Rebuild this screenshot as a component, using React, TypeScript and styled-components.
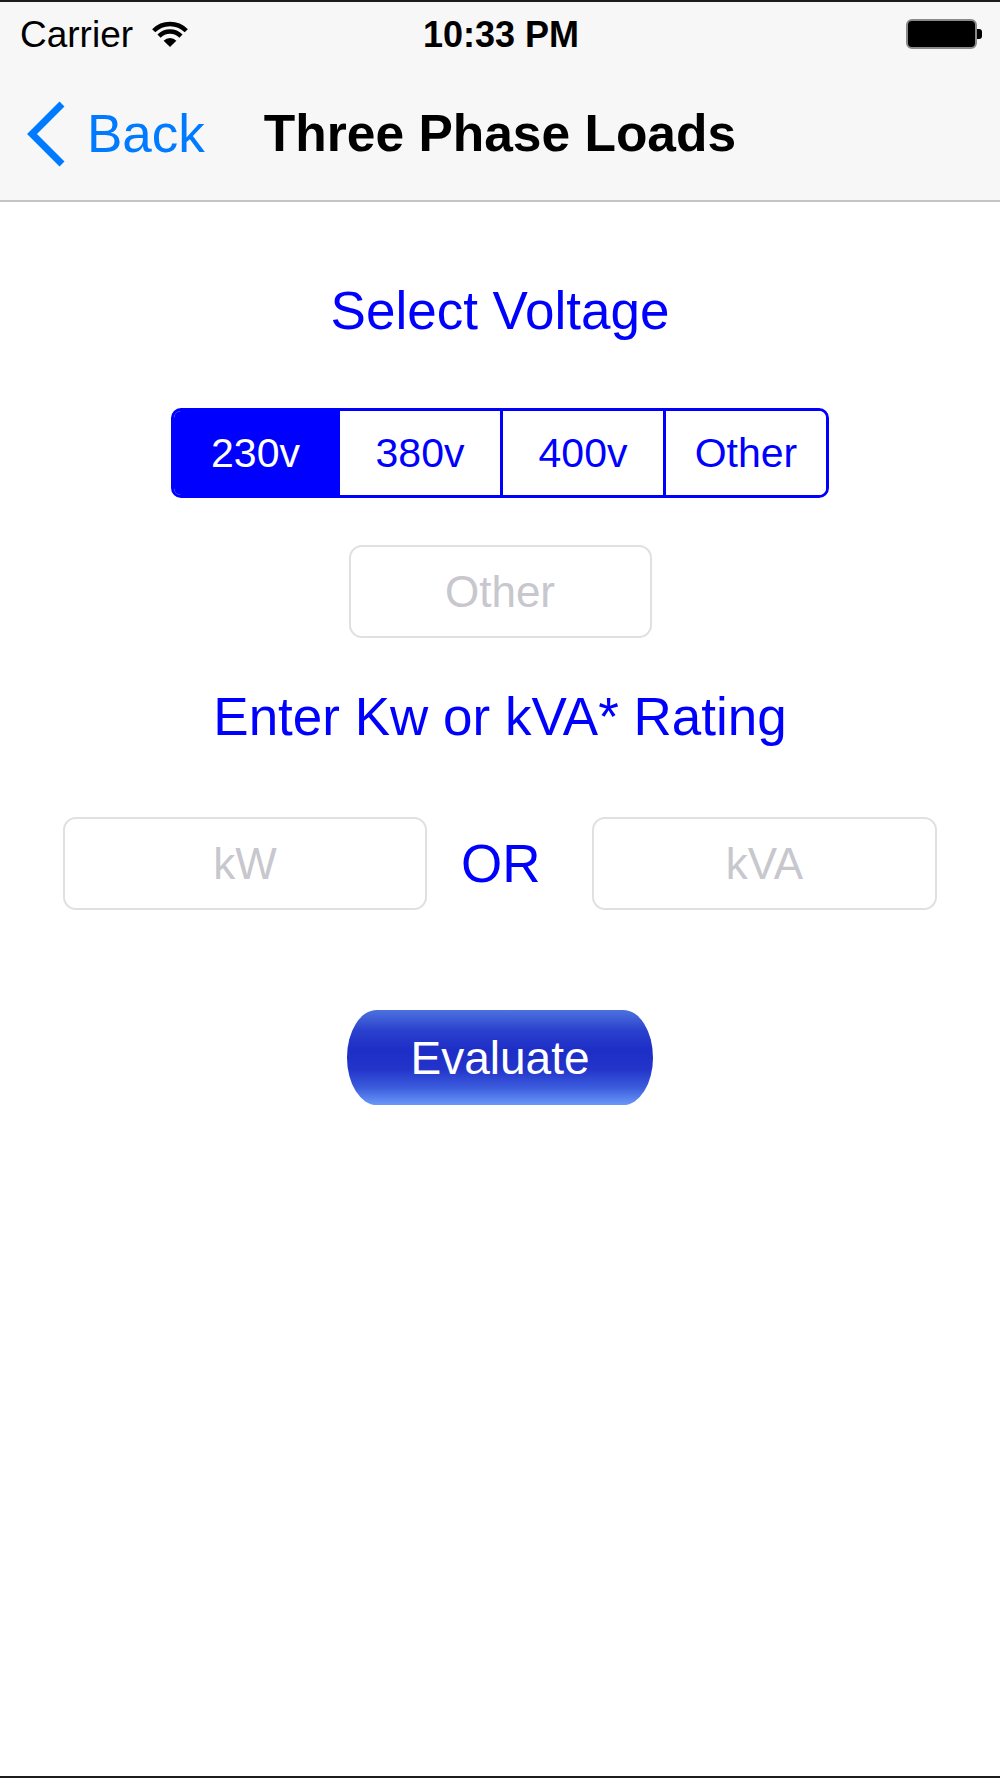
import { useState } from "react";
import styled, { createGlobalStyle } from "styled-components";

const GlobalStyle = createGlobalStyle`
  html, body {
    margin: 0;
    padding: 0;
    background: #ffffff;
  }
  body {
    font-family: "Liberation Sans", Arial, Helvetica, sans-serif;
  }
  * {
    box-sizing: border-box;
  }
`;

const BLUE = "#0000ff";
const IOS_BLUE = "#007aff";

const Screen = styled.div`
  min-height: 1778px;
  display: flex;
  flex-direction: column;
  border-top: 2px solid #1c1c1c;
  border-bottom: 2px solid #1c1c1c;
  background: #ffffff;
`;

const Header = styled.header`
  background: #f7f7f7;
  border-bottom: 2px solid #c4c4c8;
`;

const StatusBar = styled.div`
  height: 61px;
  padding: 3px 18px 0 20px;
  display: grid;
  grid-template-columns: 1fr auto 1fr;
  align-items: center;
  color: #000;
  font-size: 37px;
  line-height: 37px;
`;

const Carrier = styled.div`
  display: flex;
  align-items: center;
  gap: 17px;
`;

const Clock = styled.div`
  font-weight: 700;
  font-size: 36px;
`;

const Battery = styled.div`
  justify-self: end;
  display: flex;
  align-items: center;
`;

const BatteryBody = styled.div`
  width: 71px;
  height: 30px;
  border: 2px solid #8a8a8a;
  border-radius: 6px;
  background: #000;
`;

const BatteryNub = styled.div`
  width: 5px;
  height: 10px;
  border-radius: 0 3px 3px 0;
  background: #000;
`;

const NavBar = styled.nav`
  height: 137px;
  padding: 4px 25px 0;
  display: grid;
  grid-template-columns: 1fr auto 1fr;
  align-items: center;
`;

const BackButton = styled.button`
  display: flex;
  align-items: center;
  gap: 20px;
  padding: 0;
  border: none;
  background: none;
  color: ${IOS_BLUE};
  font-family: inherit;
  font-size: 53px;
  line-height: 53px;
  cursor: pointer;
  justify-self: start;
`;

const Title = styled.h1`
  margin: 0;
  font-size: 51.5px;
  line-height: 53px;
  font-weight: 700;
  color: #000;
`;

const Content = styled.main`
  display: flex;
  flex-direction: column;
  align-items: center;
`;

const Heading = styled.h2<{ $top: number }>`
  margin: ${(p) => p.$top}px 0 0;
  font-size: 53px;
  line-height: 53px;
  font-weight: 400;
  color: ${BLUE};
`;

const Segmented = styled.div`
  margin-top: 71px;
  width: 658px;
  height: 90px;
  display: grid;
  grid-template-columns: repeat(4, 1fr);
  border: 3px solid ${BLUE};
  border-radius: 10px;
  overflow: hidden;
`;

const Segment = styled.button<{ $active: boolean }>`
  border: none;
  border-left: 3px solid ${BLUE};
  padding: 0;
  background: ${(p) => (p.$active ? BLUE : "#ffffff")};
  color: ${(p) => (p.$active ? "#ffffff" : BLUE)};
  font-family: inherit;
  font-size: 41px;
  cursor: pointer;

  &:first-child {
    border-left: none;
  }
`;

const Field = styled.input<{ $width: number }>`
  width: ${(p) => p.$width}px;
  height: 93px;
  border: 2px solid #e0e0e2;
  border-radius: 13px;
  background: #ffffff;
  text-align: center;
  font-family: inherit;
  font-size: 44px;
  color: #000;
  outline: none;

  &::placeholder {
    color: #c7c7cd;
  }
`;

const OtherField = styled(Field)`
  margin-top: 47px;
`;

const RatingRow = styled.div`
  margin-top: 74px;
  width: 100%;
  padding: 0 63px;
  display: grid;
  grid-template-columns: 364px 1fr 345px;
  align-items: center;
`;

const OrLabel = styled.span`
  padding-left: 34px;
  font-size: 53px;
  line-height: 53px;
  color: ${BLUE};
`;

const EvaluateButton = styled.button`
  margin-top: 100px;
  width: 306px;
  height: 95px;
  border: none;
  border-radius: 30px / 48px;
  background: linear-gradient(
    to bottom,
    #4d72de 0%,
    #2a40cd 22%,
    #1d2ec6 42%,
    #2234ca 62%,
    #3c5ddd 82%,
    #6a98f8 100%
  );
  color: #ffffff;
  font-family: inherit;
  font-size: 46px;
  cursor: pointer;
`;

const SIN45 = Math.SQRT1_2;

// fan of arcs around the bottom point (cx, cy)
function arc(cx: number, cy: number, r: number) {
  const d = r * SIN45;
  return `M ${cx - d} ${cy - d} A ${r} ${r} 0 0 1 ${cx + d} ${cy - d}`;
}

function WifiIcon() {
  const cx = 20;
  const cy = 27;
  const dot = 9 * SIN45;
  return (
    <svg width="40" height="28" viewBox="0 0 40 28">
      <path
        d={`M ${cx} ${cy} L ${cx - dot} ${cy - dot} A 9 9 0 0 1 ${cx + dot} ${cy - dot} Z`}
        fill="#000"
      />
      <path d={arc(cx, cy, 15.5)} fill="none" stroke="#000" strokeWidth="4.5" />
      <path d={arc(cx, cy, 23)} fill="none" stroke="#000" strokeWidth="4.5" />
    </svg>
  );
}

function Chevron() {
  return (
    <svg width="42" height="66" viewBox="0 0 42 66">
      <polyline
        points="37,3 7,33 37,63"
        fill="none"
        stroke={IOS_BLUE}
        strokeWidth="7"
        strokeLinejoin="miter"
      />
    </svg>
  );
}

const voltages = ["230v", "380v", "400v", "Other"];

export default function App() {
  const [voltage, setVoltage] = useState("230v");

  return (
    <>
      <GlobalStyle />
      <Screen>
        <Header>
          <StatusBar>
            <Carrier>
              Carrier
              <WifiIcon />
            </Carrier>
            <Clock>10:33 PM</Clock>
            <Battery>
              <BatteryBody />
              <BatteryNub />
            </Battery>
          </StatusBar>
          <NavBar>
            <BackButton>
              <Chevron />
              Back
            </BackButton>
            <Title>Three Phase Loads</Title>
            <div />
          </NavBar>
        </Header>

        <Content>
          <Heading $top={82}>Select Voltage</Heading>
          <Segmented>
            {voltages.map((v) => (
              <Segment
                key={v}
                $active={voltage === v}
                onClick={() => setVoltage(v)}
              >
                {v}
              </Segment>
            ))}
          </Segmented>
          <OtherField $width={303} placeholder="Other" />

          <Heading $top={52}>Enter Kw or kVA* Rating</Heading>
          <RatingRow>
            <Field $width={364} placeholder="kW" />
            <OrLabel>OR</OrLabel>
            <Field $width={345} placeholder="kVA" />
          </RatingRow>

          <EvaluateButton>Evaluate</EvaluateButton>
        </Content>
      </Screen>
    </>
  );
}
